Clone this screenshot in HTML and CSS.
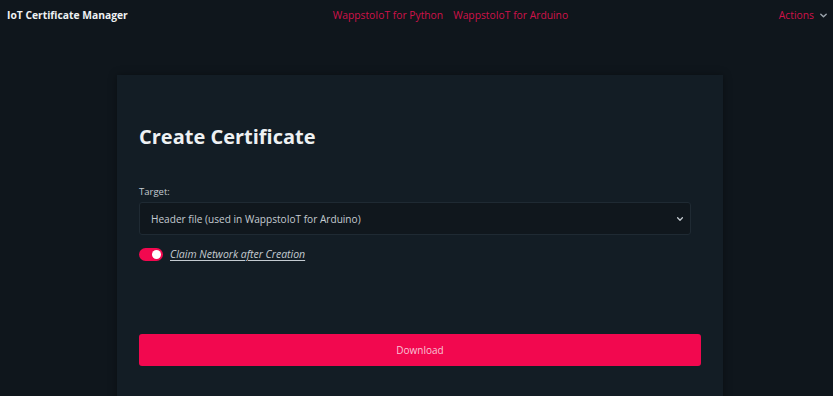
FILE: index.html
```html
<!DOCTYPE html>
<html lang="en">
<head>
    <meta charset="UTF-8">
    <meta name="viewport" content="width=device-width, initial-scale=1.0">
    <title>IoT Certificate Manager</title>
    <link rel="stylesheet" href="styles.css">
</head>
<body>

    <header class="topbar">
        <a href="#" class="brand">IoT Certificate Manager</a>
        <nav class="nav-links">
            <a href="#" class="nav-link">WappstoIoT for Python</a>
            <a href="#" class="nav-link">WappstoIoT for Arduino</a>
        </nav>
        <a href="#" class="actions">Actions
            <svg class="chev" viewBox="0 0 10 10"><polyline points="2,3.5 5,6.5 8,3.5"/></svg>
        </a>
    </header>

    <main class="card">
        <h1>Create Certificate</h1>

        <label class="field-label" for="target">Target:</label>
        <div class="select">
            <span>Header file (used in WappstoIoT for Arduino)</span>
            <svg class="chev" viewBox="0 0 10 10"><polyline points="2,3.5 5,6.5 8,3.5"/></svg>
        </div>

        <div class="switch-row">
            <span class="switch"><span class="knob"></span></span>
            <span class="switch-label">Claim Network after Creation</span>
        </div>

        <button class="btn">Download</button>
    </main>

</body>
</html>
```

FILE: styles.css
```css
:root {
    --bg-color: #0f161c;
    --card-color: #131d25;
    --field-color: #10171d;
    --border-color: #1f2a33;
    --pink: #f2084f;
    --pink-link: #d0124a;
    --text-primary: #eef1f3;
    --text-secondary: #c4cbd1;
}
* { margin: 0; padding: 0; box-sizing: border-box; }
body {
    font-family: 'Open Sans', 'Noto Sans', sans-serif;
    background-color: var(--bg-color);
    color: var(--text-primary);
    height: 396px;
    overflow: hidden;
}

/* --- top bar --- */
.topbar {
    display: flex;
    align-items: center;
    height: 30px;
    padding: 0 5px 0 7px;
    font-size: 10.3px;
}
.brand { color: var(--text-primary); font-weight: 700; text-decoration: none; }
.nav-links { display: flex; gap: 10px; margin-left: 205px; }
.nav-link { color: var(--pink-link); text-decoration: none; }
.actions { margin-left: auto; color: var(--pink-link); text-decoration: none; display: flex; align-items: center; gap: 5px; }
.actions .chev { width: 9px; height: 9px; stroke: #9aa3ab; }
.chev { fill: none; stroke-width: 1.6; stroke-linecap: round; stroke-linejoin: round; }

/* --- card --- */
.card {
    width: 606px;
    margin: 45px 0 0 117px;
    height: 330px;
    background-color: var(--card-color);
    padding: 48px 22px 0 22px;
    box-shadow: 0 0 8px rgba(0, 0, 0, 0.35);
}
.card h1 { font-size: 20px; font-weight: 700; line-height: 28px; margin-bottom: 34px; }

.field-label { display: block; font-size: 9.5px; color: var(--text-secondary); line-height: 13px; margin-bottom: 4px; }
.select {
    width: 552px;
    height: 33px;
    display: flex;
    align-items: center;
    justify-content: space-between;
    padding: 0 6px 0 11px;
    background-color: var(--field-color);
    border: 1px solid var(--border-color);
    border-radius: 3px;
    font-size: 10.1px;
    color: var(--text-secondary);
}
.select .chev { width: 8px; height: 8px; stroke: #c4cbd1; }

.switch-row { display: flex; align-items: center; gap: 7px; margin-top: 12px; }
.switch {
    width: 24px;
    height: 13px;
    border-radius: 7px;
    background-color: var(--pink);
    display: flex;
    align-items: center;
    justify-content: flex-end;
    padding: 0 2px;
}
.knob { width: 9px; height: 9px; border-radius: 50%; background-color: #fff; }
.switch-label { font-size: 10.5px; font-style: italic; color: var(--text-secondary); text-decoration: underline; text-underline-offset: 2px; }

.btn {
    display: block;
    width: 562px;
    height: 32px;
    margin-top: 73px;
    border: none;
    border-radius: 3px;
    background-color: var(--pink);
    color: #f8c4d6;
    font-family: inherit;
    font-size: 10px;
    cursor: pointer;
}
```
